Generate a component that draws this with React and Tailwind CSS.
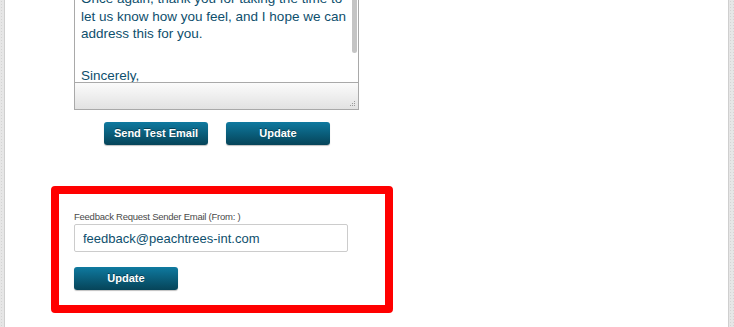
import React from "react";

const font = { fontFamily: '"Liberation Sans", Arial, Helvetica, sans-serif' };

const Button = ({ children, className = "" }) => (
  <button
    className={`h-[23px] w-[104px] rounded-[3px] bg-gradient-to-b from-[#0f7aa0] to-[#064459] text-[11px] font-bold text-white [text-shadow:0_-1px_0_rgba(0,0,0,0.4)] shadow-[0_1px_1px_rgba(0,0,0,0.25)] ${className}`}
  >
    {children}
  </button>
);

const GrayStrip = ({ className = "" }) => (
  <div
    className={`shrink-0 bg-[#e6e6e6] bg-[radial-gradient(#d4d4d4_0.6px,transparent_0.6px)] bg-[length:3px_3px] ${className}`}
  />
);

export default function App() {
  return (
    <div className="flex h-[327px] w-[734px] overflow-hidden bg-white" style={font}>
      <GrayStrip className="w-[5px] border-r border-[#cfcfcf]" />

      <div className="flex-1">
        {/* Email body editor */}
        <div className="ml-[69px] -mt-[20px] w-[285px] border border-[#a9a9a9] bg-white">
          <div className="relative h-[102px] overflow-hidden border-b border-[#a9a9a9] pl-[6px] pr-[4px] pt-[9px] text-[13.5px] leading-[17.5px] text-[#0e4f6d]">
            <div className="absolute right-[1px] top-0 h-[72px] w-[5px] rounded-[3px] bg-[#c4c4c4]" />
            <p>Once again, thank you for taking the time to let us know how you feel, and I hope we can address this for you.</p>
            <p className="mt-[24px]">Sincerely,</p>
          </div>
          <div className="relative h-[26px] bg-gradient-to-b from-[#fbfbfb] to-[#e2e2e2]">
            <svg className="absolute bottom-[2px] right-[2px]" width="7" height="7" viewBox="0 0 7 7">
              <rect x="5" y="1" width="1" height="1" fill="#9a9a9a" />
              <rect x="3" y="3" width="1" height="1" fill="#9a9a9a" />
              <rect x="5" y="3" width="1" height="1" fill="#9a9a9a" />
              <rect x="1" y="5" width="1" height="1" fill="#9a9a9a" />
              <rect x="3" y="5" width="1" height="1" fill="#9a9a9a" />
              <rect x="5" y="5" width="1" height="1" fill="#9a9a9a" />
            </svg>
          </div>
        </div>

        <div className="ml-[99px] mt-[12px] flex gap-[18px]">
          <Button>Send Test Email</Button>
          <Button>Update</Button>
        </div>

        {/* Sender email */}
        <div className="ml-[46px] mt-[41px] h-[127px] w-[342px] rounded-[4px] border-[8px] border-[#ff0000] bg-white pl-[15px] pt-[17px]">
          <label className="block text-[9.5px] leading-[12px] tracking-[-0.25px] text-[#4a4a4a]">
            Feedback Request Sender Email (From: )
          </label>
          <input
            readOnly
            value="feedback@peachtrees-int.com"
            className="mt-[1px] h-[28px] w-[274px] rounded-[2px] border border-[#cccccc] px-[8px] text-[13px] text-[#0e4f6d] outline-none"
            style={font}
          />
          <Button className="mt-[15px] block">Update</Button>
        </div>
      </div>

      <GrayStrip className="w-[6px] border-l border-[#cfcfcf]" />
    </div>
  );
}
